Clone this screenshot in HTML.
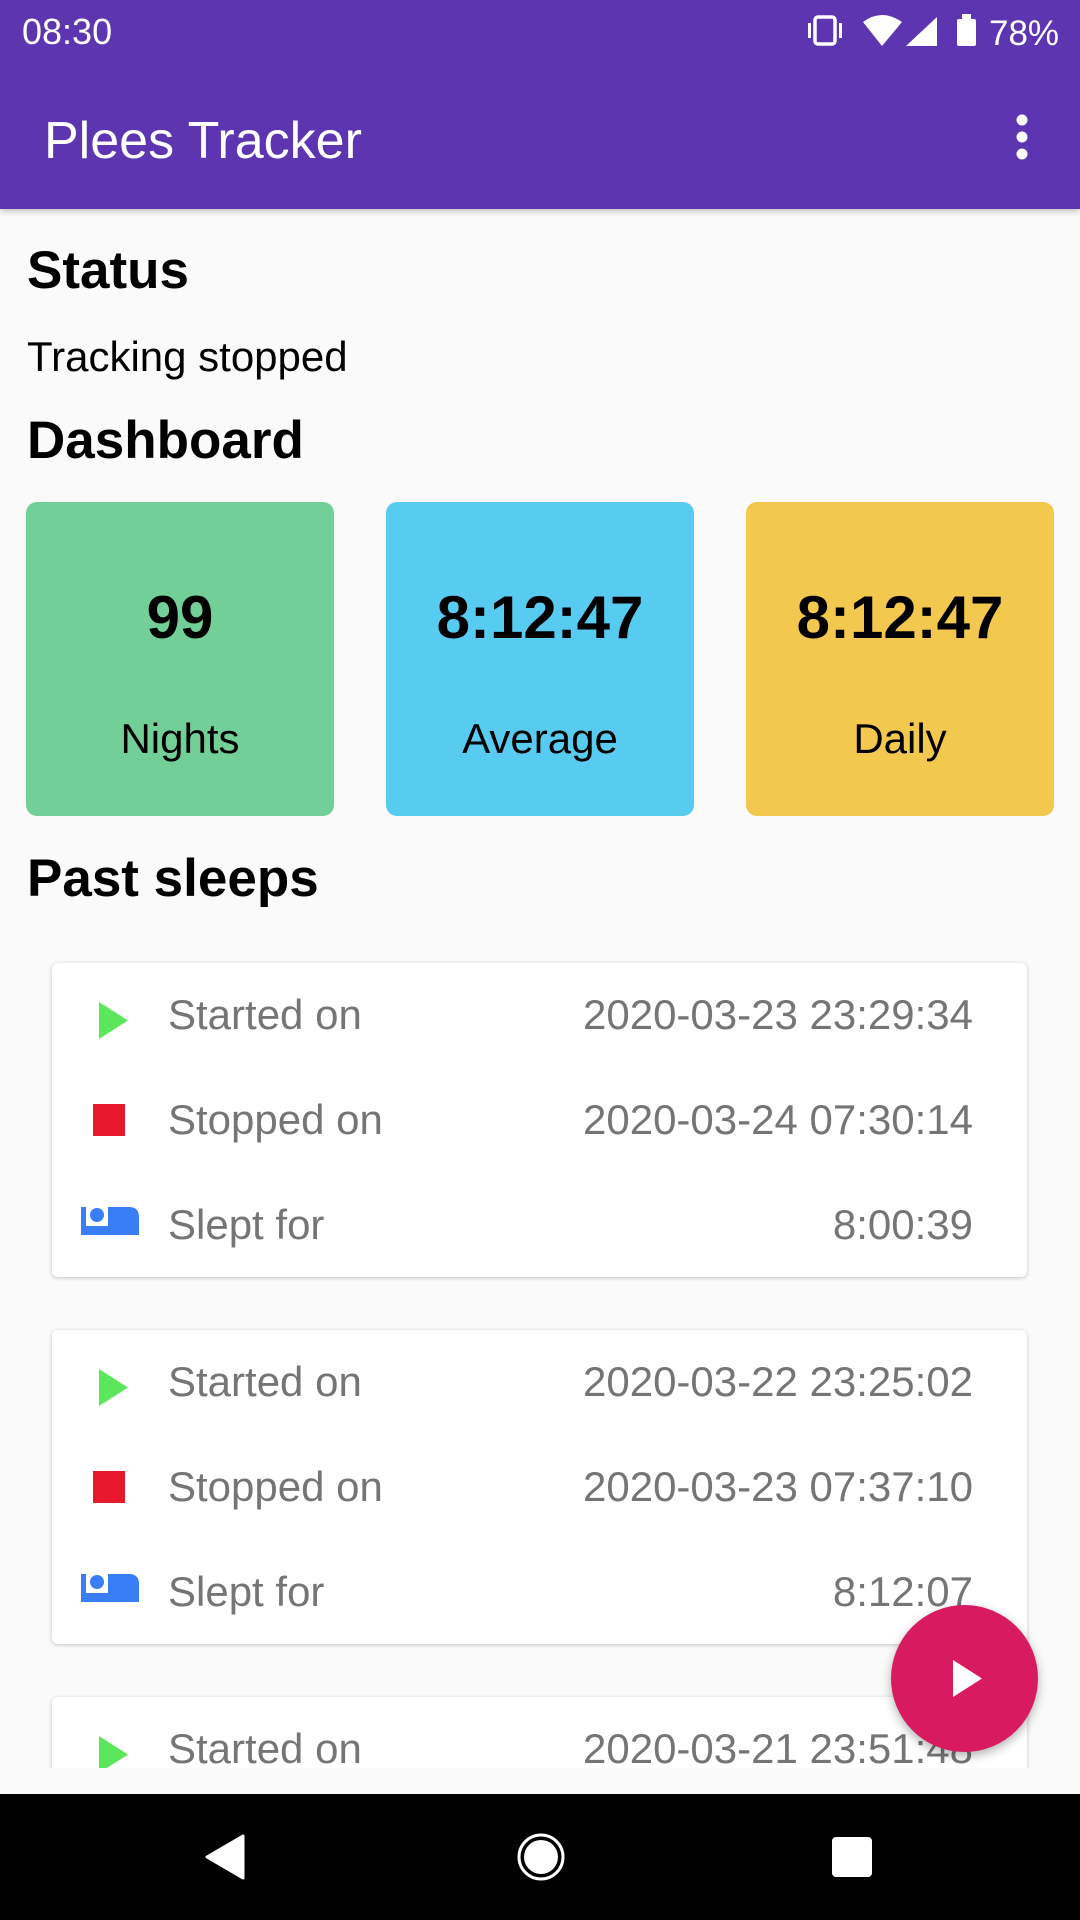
<!DOCTYPE html>
<html><head><meta charset="utf-8"><style>
*{margin:0;padding:0;box-sizing:border-box}
body{width:1080px;height:1920px;background:#fafafa;font-family:"Liberation Sans",sans-serif;position:relative;overflow:hidden}
.a{position:absolute;line-height:1;white-space:nowrap}
.bar{position:absolute;left:0;top:0;width:1080px;height:209px;background:#5e35b1;box-shadow:0 2px 6px rgba(0,0,0,.25)}
.h{font-weight:bold;font-size:53px;color:#000;left:27px}
.box{position:absolute;top:502px;width:308px;height:314px;border-radius:11px}
.num{position:absolute;left:0;width:100%;text-align:center;font-weight:bold;font-size:60px;top:588px;line-height:1}
.lab{position:absolute;left:0;width:100%;text-align:center;font-size:42px;top:718px;line-height:1}
.card{position:absolute;left:52px;width:975px;height:314px;background:#fff;border-radius:6px;box-shadow:0 1px 4px rgba(0,0,0,.22)}
.lt{position:absolute;left:116px;font-size:42px;color:#757575;line-height:1}
.rt{position:absolute;right:54px;font-size:42px;color:#757575;line-height:1}
</style></head><body>
<div class="bar"></div>
<div class="a" style="left:22px;top:14px;font-size:36px;color:#fff">08:30</div>
<svg style="position:absolute;left:800px;top:10px" width="270" height="44" viewBox="800 10 270 44">
<g fill="#fff">
<rect x="815" y="17" width="20" height="27" rx="3" fill="none" stroke="#fff" stroke-width="3.5"/>
<rect x="808" y="23" width="3" height="15"/><rect x="839" y="23" width="3" height="15"/>
<path d="M863 22 Q882 8 902 22 L882 46 Z"/>
<path d="M937 17 L937 46 L906 46 Z"/>
<rect x="957" y="19" width="19" height="27" rx="2"/><rect x="962" y="14" width="9" height="6"/>
</g>
<text x="989" y="45" font-family="Liberation Sans" font-size="35" fill="#fff">78%</text>
</svg>
<div class="a" style="left:44px;top:115px;font-size:52px;color:#fff">Plees Tracker</div>
<svg style="position:absolute;left:1012px;top:112px" width="20" height="50"><circle cx="10" cy="8" r="5.5" fill="#fff"/><circle cx="10" cy="25" r="5.5" fill="#fff"/><circle cx="10" cy="42" r="5.5" fill="#fff"/></svg>

<div class="a h" style="top:244px">Status</div>
<div class="a" style="left:27px;top:336px;font-size:42px;color:#000">Tracking stopped</div>
<div class="a h" style="top:414px">Dashboard</div>

<div class="box" style="left:26px;background:#71cf97"></div>
<div class="box" style="left:386px;background:#58cbf1"></div>
<div class="box" style="left:746px;background:#f2c84f"></div>
<div style="position:absolute;left:26px;width:308px;top:0"><div class="num">99</div><div class="lab">Nights</div></div>
<div style="position:absolute;left:386px;width:308px;top:0"><div class="num">8:12:47</div><div class="lab">Average</div></div>
<div style="position:absolute;left:746px;width:308px;top:0"><div class="num">8:12:47</div><div class="lab">Daily</div></div>

<div class="a h" style="top:852px">Past sleeps</div>

<div style="position:absolute;left:0;top:0;width:1080px;height:1768px;overflow:hidden">
<div class="card" style="top:963px">
<svg style="position:absolute;left:47px;top:39px" width="30" height="37"><path d="M0 0 L29 18.5 L0 37Z" fill="#5ce65c"/></svg>
<div class="lt" style="top:31px">Started on</div><div class="rt" style="top:31px">2020-03-23 23:29:34</div>
<div style="position:absolute;left:41px;top:141px;width:32px;height:32px;background:#e8192c"></div>
<div class="lt" style="top:136px">Stopped on</div><div class="rt" style="top:136px">2020-03-24 07:30:14</div>
<svg style="position:absolute;left:29px;top:244px" width="58" height="28"><path d="M0 0H5V19H27V0H48Q58 0 58 10V28H0Z" fill="#3a7ef7"/><circle cx="16" cy="8" r="7" fill="#3a7ef7"/></svg>
<div class="lt" style="top:241px">Slept for</div><div class="rt" style="top:241px">8:00:39</div>
</div>
<div class="card" style="top:1330px">
<svg style="position:absolute;left:47px;top:39px" width="30" height="37"><path d="M0 0 L29 18.5 L0 37Z" fill="#5ce65c"/></svg>
<div class="lt" style="top:31px">Started on</div><div class="rt" style="top:31px">2020-03-22 23:25:02</div>
<div style="position:absolute;left:41px;top:141px;width:32px;height:32px;background:#e8192c"></div>
<div class="lt" style="top:136px">Stopped on</div><div class="rt" style="top:136px">2020-03-23 07:37:10</div>
<svg style="position:absolute;left:29px;top:244px" width="58" height="28"><path d="M0 0H5V19H27V0H48Q58 0 58 10V28H0Z" fill="#3a7ef7"/><circle cx="16" cy="8" r="7" fill="#3a7ef7"/></svg>
<div class="lt" style="top:241px">Slept for</div><div class="rt" style="top:241px">8:12:07</div>
</div>
<div class="card" style="top:1697px">
<svg style="position:absolute;left:47px;top:39px" width="30" height="37"><path d="M0 0 L29 18.5 L0 37Z" fill="#5ce65c"/></svg>
<div class="lt" style="top:31px">Started on</div><div class="rt" style="top:31px">2020-03-21 23:51:48</div>
</div>
</div>

<div style="position:absolute;left:891px;top:1605px;width:147px;height:147px;border-radius:50%;background:#d81b60;box-shadow:0 4px 10px rgba(0,0,0,.3)"></div>
<svg style="position:absolute;left:953px;top:1660px" width="30" height="38"><path d="M0 0L29 18.5L0 37Z" fill="#fff"/></svg>

<div style="position:absolute;left:0;top:1794px;width:1080px;height:126px;background:#000"></div>
<svg style="position:absolute;left:0;top:1794px" width="1080" height="126">
<path d="M243 42 L243 84 L207 63Z" fill="#fff" stroke="#fff" stroke-width="3" stroke-linejoin="round"/>
<circle cx="541" cy="63" r="22" fill="none" stroke="#fff" stroke-width="3"/>
<circle cx="541" cy="63" r="17" fill="#fff"/>
<rect x="832" y="43" width="40" height="40" rx="4" fill="#fff"/>
</svg>
</body></html>
